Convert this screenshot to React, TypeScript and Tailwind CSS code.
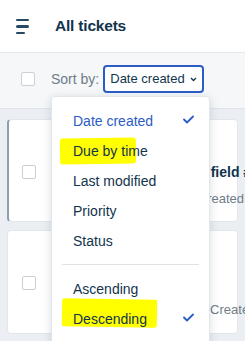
import React from "react";

const Check = () => (
  <svg width="11" height="9" viewBox="0 0 11 9" fill="none">
    <path d="M1 4.5 L4 7.5 L10 1.5" stroke="#2c5cc5" strokeWidth="1.8" strokeLinecap="round" strokeLinejoin="round" />
  </svg>
);

const Box = () => <div className="w-[14px] h-[14px] rounded-[2px] border border-[#c8cfd6] bg-white" />;

const sortItems = ["Date created", "Due by time", "Last modified", "Priority", "Status"];

const App = () => {
  return (
    <div className="relative w-[245px] h-[341px] overflow-hidden bg-[#ebeff3] text-[#12344d] font-['Liberation_Sans',Arial,sans-serif]">
      <div className="h-[53px] bg-white border-b border-[#e3e8ed] flex items-center">
        <div className="ml-[16px] flex flex-col gap-[4px] pt-[1px] shrink-0">
          <div className="w-[13px] h-[2.5px] rounded bg-[#264966]" />
          <div className="w-[13px] h-[2.5px] rounded bg-[#264966]" />
          <div className="w-[9px] h-[2.5px] rounded bg-[#264966]" />
        </div>
        <span className="ml-[26px] text-[15.5px] font-semibold tracking-[-0.2px]">All tickets</span>
      </div>

      <div className="h-[56px] bg-[#f5f7f9] border-b border-[#dfe4e9] pt-[12px]">
        <div className="flex items-center h-[28px] whitespace-nowrap">
          <div className="ml-[21px] shrink-0"><Box /></div>
          <span className="ml-[16px] text-[14px] text-[#6f7c87]">Sort by:</span>
          <div className="ml-[4px] shrink-0 w-[101px] h-[28px] rounded-[4px] border-2 border-[#2c5cc5] bg-white flex items-center pl-[5px] text-[13px]">
            Date created
            <svg className="ml-[5px] shrink-0" width="7" height="5" viewBox="0 0 7 5" fill="none">
              <path d="M1 1 L3.5 3.5 L6 1" stroke="#12344d" strokeWidth="1.3" />
            </svg>
          </div>
        </div>
      </div>

      <div className="px-[7px] pt-[10px] flex flex-col gap-[8px]">
        <div className="h-[103px] bg-white rounded-[4px] border border-[#e3e7eb] border-l-[2px] border-l-[#8e9fb0] flex">
          <div className="ml-[13px] mt-[45px] shrink-0"><Box /></div>
          <div className="ml-[15px] mt-[32px] shrink-0 w-[37px] h-[37px] rounded-[4px] bg-[#f3d9dc]" />
          <div className="ml-[13px] mt-[42px] whitespace-nowrap">
            <div className="text-[14px] font-bold">Missing custom field #2</div>
            <div className="mt-[6px] text-[13px] text-[#6f7c87]">Aditya Sharma · Created 2 hours ago</div>
          </div>
        </div>
        <div className="h-[104px] bg-white rounded-[4px] border border-[#e3e7eb] flex">
          <div className="ml-[14px] mt-[45px] shrink-0"><Box /></div>
          <div className="ml-[15px] mt-[31px] shrink-0 w-[37px] h-[39px] rounded-[4px] bg-[#d6d3ec]" />
          <div className="ml-[13px] mt-[42px] whitespace-nowrap">
            <div className="text-[14px] font-bold">Test ticket</div>
            <div className="mt-[6px] text-[13px] text-[#6f7c87]">Michael Johnson · Created 3 days ago</div>
          </div>
        </div>
      </div>

      <div className="absolute left-[51px] top-[96px] w-[159px] h-[260px] bg-white border border-[#e1e6eb] rounded-[4px] shadow-[0_2px_10px_rgba(18,52,77,0.16)] px-[10px] pt-[9px]">
        {sortItems.map((s, i) => (
          <div key={s} className={`relative h-[30px] flex items-center pl-[11px] pr-[5px] text-[14px] ${i === 0 ? "text-[#2c5cc5]" : ""}`}>
            {s === "Due by time" && (
              <div className="absolute left-[-2px] top-[2px] w-[76px] h-[26px] bg-[#ffff00] rounded-[3px] -rotate-[1deg]" />
            )}
            <span className="relative">{s}</span>
            {i === 0 && <span className="ml-auto mt-[-4px]"><Check /></span>}
          </div>
        ))}
        <div className="mt-[8px] mb-[9px] h-px bg-[#dfe3e7]" />
        <div className="h-[30px] flex items-center pl-[11px] text-[14px]">Ascending</div>
        <div className="relative h-[30px] flex items-center pl-[11px] pr-[5px] text-[14px]">
          <div className="absolute left-[0px] top-[-5px] w-[95px] h-[28px] bg-[#ffff00] rounded-[2px] rotate-[1deg]" />
          <span className="relative">Descending</span>
          <span className="ml-auto mt-[-4px]"><Check /></span>
        </div>
      </div>
    </div>
  );
};

export default App;
